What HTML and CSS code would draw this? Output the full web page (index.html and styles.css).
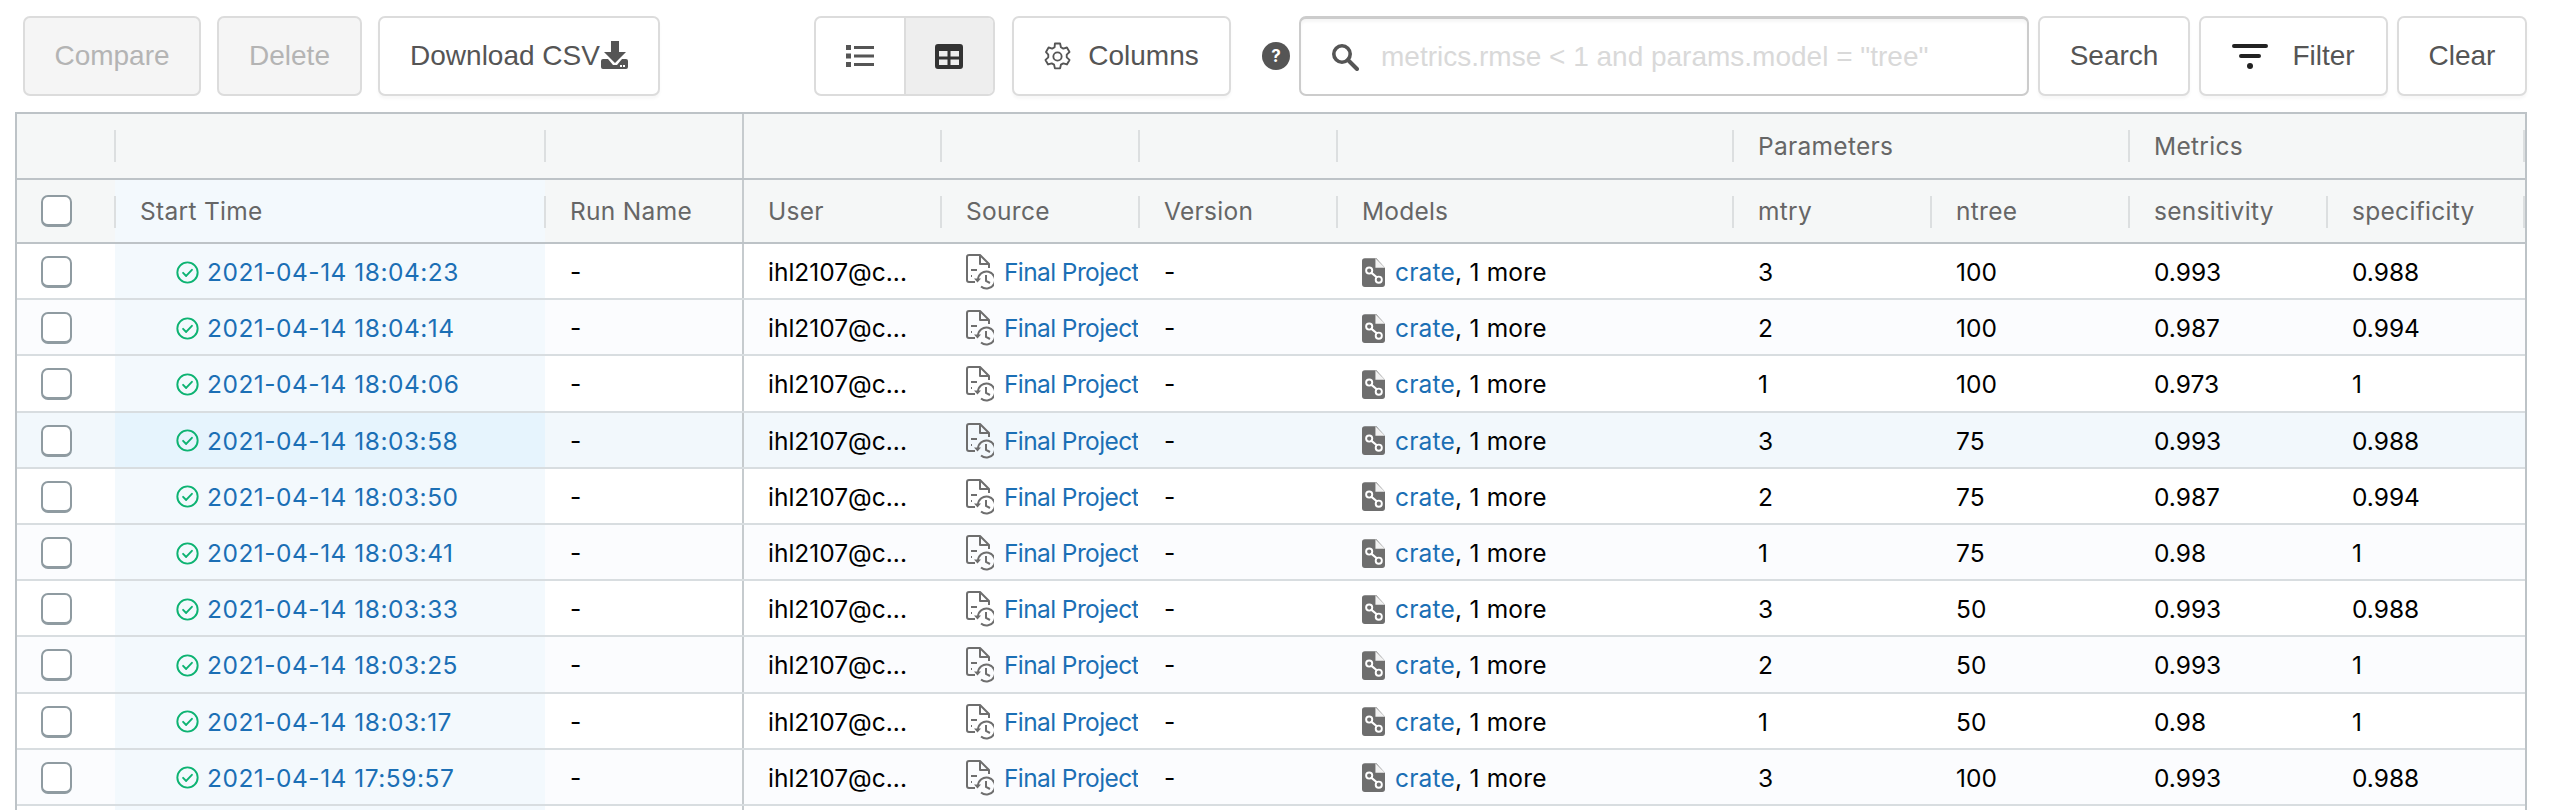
FILE: index.html
```html
<!DOCTYPE html>
<html lang="en">
<head>
<meta charset="utf-8">
<title>Experiment runs</title>
<link rel="stylesheet" href="styles.css">
</head>
<body>
<!-- Shared icons -->
<svg class="icon-defs" width="0" height="0">
  <symbol id="i-check" viewBox="0 0 24 24">
    <circle cx="12" cy="12" r="10.600" fill="none" stroke="#0db372" stroke-width="2"/>
    <path d="M7.400 12.400l3.200 3.200 6-6.400" fill="none" stroke="#0db372" stroke-width="2" stroke-linecap="round" stroke-linejoin="round"/>
  </symbol>
  <symbol id="i-source" viewBox="0 0 28 36">
    <path d="M9 28H3a2 2 0 0 1-2-2V3a2 2 0 0 1 2-2h11l9 9v4" fill="none" stroke="#6e6e6e" stroke-width="2" stroke-linejoin="round"/>
    <path d="M14 1v9h9" fill="none" stroke="#6e6e6e" stroke-width="2" stroke-linejoin="round"/>
    <path d="M5 16h6M5 22h1" fill="none" stroke="#6e6e6e" stroke-width="2"/>
    <path d="M12 26a8.500 8.500 0 1 1 3 6.500" fill="none" stroke="#6e6e6e" stroke-width="2"/>
    <path d="M8 24.500h7l-3.500 4z" fill="#6e6e6e"/>
    <path d="M20 21v6l4 2" fill="none" stroke="#6e6e6e" stroke-width="2"/>
  </symbol>
  <symbol id="i-model" viewBox="0 0 24 30">
    <path d="M3 0h12l9 10v17a3 3 0 0 1-3 3H3a3 3 0 0 1-3-3V3a3 3 0 0 1 3-3z" fill="#6e6e6e"/>
    <path d="M14 0v10h10z" fill="#f2f2f2"/>
    <path d="M7 13l11 9" stroke="#fff" stroke-width="2.200"/>
    <circle cx="7.500" cy="13" r="3.200" fill="#6e6e6e" stroke="#fff" stroke-width="2"/>
    <circle cx="17.500" cy="22.500" r="3.200" fill="#6e6e6e" stroke="#fff" stroke-width="2"/>
  </symbol>
</svg>

<!-- Toolbar -->
<div class="toolbar">
  <button class="btn btn-disabled btn-compare">Compare</button>
  <button class="btn btn-disabled btn-delete">Delete</button>
  <button class="btn btn-download">Download CSV<svg class="csv-icon" viewBox="0 0 27 28" width="27" height="28"><path d="M10 0h8v11h7L14 22 3 11h7z" fill="#555"/><path d="M2 18h5l5 6h4l5-6h4a2 2 0 0 1 2 2v6a2 2 0 0 1-2 2H2a2 2 0 0 1-2-2v-6a2 2 0 0 1 2-2z" fill="#555"/><path d="M19 24h2v2h-2zM22 24h2v2h-2z" fill="#fff"/></svg></button>
  <div class="view-toggle">
    <div class="view-item">
      <svg viewBox="0 0 28 24" width="28" height="24"><path d="M0 1h5v5H0zM0 9.500h5v5H0zM0 18h5v5H0zM8 2h20v3H8zM8 10.500h20v3H8zM8 19h20v3H8z" fill="#555"/></svg>
    </div>
    <div class="view-item view-active">
      <svg viewBox="0 0 28 25" width="28" height="25"><path fill-rule="evenodd" d="M3 0h22a3 3 0 0 1 3 3v19a3 3 0 0 1-3 3H3a3 3 0 0 1-3-3V3a3 3 0 0 1 3-3zM4 7v5.500h8.500V7zM15.500 7v5.500H24V7zM4 15.500V21h8.500v-5.500zM15.500 15.500V21H24v-5.500z" fill="#333"/></svg>
    </div>
  </div>
  <button class="btn btn-columns">
    <svg viewBox="0 0 26 28" width="27" height="29"><path d="M10.500 1.500h5l.8 3.600 2.300 1.300 3.500-1.100 2.500 4.400-2.700 2.500v2.600l2.700 2.500-2.500 4.400-3.500-1.100-2.300 1.300-.8 3.600h-5l-.8-3.600-2.300-1.300-3.500 1.100-2.500-4.400 2.700-2.500v-2.600L1.900 9.700l2.500-4.400 3.500 1.100 2.300-1.300z" fill="none" stroke="#555" stroke-width="1.800" stroke-linejoin="round"/><circle cx="13" cy="14" r="4" fill="none" stroke="#555" stroke-width="1.800"/></svg>
    Columns
  </button>
  <div class="help-icon">?</div>
  <div class="search-box">
    <svg viewBox="0 0 28 28" width="28" height="28"><circle cx="11" cy="11" r="8.200" fill="none" stroke="#555" stroke-width="3.600"/><path d="M17 17l9 9" stroke="#555" stroke-width="4" stroke-linecap="round"/></svg>
    <span class="search-placeholder">metrics.rmse &lt; 1 and params.model = "tree"</span>
  </div>
  <button class="btn btn-search">Search</button>
  <button class="btn btn-filter">
    <svg viewBox="0 0 36 25" width="36" height="25"><path d="M2 0h32a2 2 0 0 1 0 4H2a2 2 0 0 1 0-4zM9 10h18a2 2 0 0 1 0 4H9a2 2 0 0 1 0-4z" fill="#222"/><circle cx="18" cy="22" r="3" fill="#222"/></svg>
    Filter
  </button>
  <button class="btn btn-clear">Clear</button>
</div>

<!-- Runs table -->
<div class="runs-table">
  <div class="row head-row">
    <div class="cell c-check"></div>
    <div class="cell c-time"><span class="sep"></span></div>
    <div class="cell c-std"><span class="sep"></span></div>
    <div class="cell c-std group-start"></div>
    <div class="cell c-std"><span class="sep"></span></div>
    <div class="cell c-std"><span class="sep"></span></div>
    <div class="cell c-models"><span class="sep"></span></div>
    <div class="cell c-group-wide"><span class="sep"></span>Parameters</div>
    <div class="cell c-group-wide"><span class="sep"></span>Metrics<span class="sep sep-end"></span></div>
  </div>
  <div class="row head-row">
    <div class="cell c-check"><span class="checkbox"></span></div>
    <div class="cell c-time sorted"><span class="sep"></span>Start Time</div>
    <div class="cell c-std"><span class="sep"></span>Run Name</div>
    <div class="cell c-std group-start">User</div>
    <div class="cell c-std"><span class="sep"></span>Source</div>
    <div class="cell c-std"><span class="sep"></span>Version</div>
    <div class="cell c-models"><span class="sep"></span>Models</div>
    <div class="cell c-std"><span class="sep"></span>mtry</div>
    <div class="cell c-std"><span class="sep"></span>ntree</div>
    <div class="cell c-std"><span class="sep"></span>sensitivity</div>
    <div class="cell c-std"><span class="sep"></span>specificity<span class="sep sep-end"></span></div>
  </div>

  <div class="row">
    <div class="cell c-check"><span class="checkbox"></span></div>
    <div class="cell c-time sorted date-cell"><svg class="status-icon"><use href="#i-check"/></svg><a>2021-04-14 18:04:23</a></div>
    <div class="cell c-std">-</div>
    <div class="cell c-std group-start">ihl2107@c...</div>
    <div class="cell c-std"><svg class="source-icon"><use href="#i-source"/></svg><a class="clip">Final Project</a></div>
    <div class="cell c-std">-</div>
    <div class="cell c-models"><svg class="model-icon"><use href="#i-model"/></svg><a>crate</a>, 1 more</div>
    <div class="cell c-std">3</div>
    <div class="cell c-std">100</div>
    <div class="cell c-std">0.993</div>
    <div class="cell c-std">0.988</div>
  </div>
  <div class="row">
    <div class="cell c-check"><span class="checkbox"></span></div>
    <div class="cell c-time sorted date-cell"><svg class="status-icon"><use href="#i-check"/></svg><a>2021-04-14 18:04:14</a></div>
    <div class="cell c-std">-</div>
    <div class="cell c-std group-start">ihl2107@c...</div>
    <div class="cell c-std"><svg class="source-icon"><use href="#i-source"/></svg><a class="clip">Final Project</a></div>
    <div class="cell c-std">-</div>
    <div class="cell c-models"><svg class="model-icon"><use href="#i-model"/></svg><a>crate</a>, 1 more</div>
    <div class="cell c-std">2</div>
    <div class="cell c-std">100</div>
    <div class="cell c-std">0.987</div>
    <div class="cell c-std">0.994</div>
  </div>
  <div class="row">
    <div class="cell c-check"><span class="checkbox"></span></div>
    <div class="cell c-time sorted date-cell"><svg class="status-icon"><use href="#i-check"/></svg><a>2021-04-14 18:04:06</a></div>
    <div class="cell c-std">-</div>
    <div class="cell c-std group-start">ihl2107@c...</div>
    <div class="cell c-std"><svg class="source-icon"><use href="#i-source"/></svg><a class="clip">Final Project</a></div>
    <div class="cell c-std">-</div>
    <div class="cell c-models"><svg class="model-icon"><use href="#i-model"/></svg><a>crate</a>, 1 more</div>
    <div class="cell c-std">1</div>
    <div class="cell c-std">100</div>
    <div class="cell c-std">0.973</div>
    <div class="cell c-std">1</div>
  </div>
  <div class="row row-hover">
    <div class="cell c-check"><span class="checkbox"></span></div>
    <div class="cell c-time sorted date-cell"><svg class="status-icon"><use href="#i-check"/></svg><a>2021-04-14 18:03:58</a></div>
    <div class="cell c-std">-</div>
    <div class="cell c-std group-start">ihl2107@c...</div>
    <div class="cell c-std"><svg class="source-icon"><use href="#i-source"/></svg><a class="clip">Final Project</a></div>
    <div class="cell c-std">-</div>
    <div class="cell c-models"><svg class="model-icon"><use href="#i-model"/></svg><a>crate</a>, 1 more</div>
    <div class="cell c-std">3</div>
    <div class="cell c-std">75</div>
    <div class="cell c-std">0.993</div>
    <div class="cell c-std">0.988</div>
  </div>
  <div class="row">
    <div class="cell c-check"><span class="checkbox"></span></div>
    <div class="cell c-time sorted date-cell"><svg class="status-icon"><use href="#i-check"/></svg><a>2021-04-14 18:03:50</a></div>
    <div class="cell c-std">-</div>
    <div class="cell c-std group-start">ihl2107@c...</div>
    <div class="cell c-std"><svg class="source-icon"><use href="#i-source"/></svg><a class="clip">Final Project</a></div>
    <div class="cell c-std">-</div>
    <div class="cell c-models"><svg class="model-icon"><use href="#i-model"/></svg><a>crate</a>, 1 more</div>
    <div class="cell c-std">2</div>
    <div class="cell c-std">75</div>
    <div class="cell c-std">0.987</div>
    <div class="cell c-std">0.994</div>
  </div>
  <div class="row">
    <div class="cell c-check"><span class="checkbox"></span></div>
    <div class="cell c-time sorted date-cell"><svg class="status-icon"><use href="#i-check"/></svg><a>2021-04-14 18:03:41</a></div>
    <div class="cell c-std">-</div>
    <div class="cell c-std group-start">ihl2107@c...</div>
    <div class="cell c-std"><svg class="source-icon"><use href="#i-source"/></svg><a class="clip">Final Project</a></div>
    <div class="cell c-std">-</div>
    <div class="cell c-models"><svg class="model-icon"><use href="#i-model"/></svg><a>crate</a>, 1 more</div>
    <div class="cell c-std">1</div>
    <div class="cell c-std">75</div>
    <div class="cell c-std">0.98</div>
    <div class="cell c-std">1</div>
  </div>
  <div class="row">
    <div class="cell c-check"><span class="checkbox"></span></div>
    <div class="cell c-time sorted date-cell"><svg class="status-icon"><use href="#i-check"/></svg><a>2021-04-14 18:03:33</a></div>
    <div class="cell c-std">-</div>
    <div class="cell c-std group-start">ihl2107@c...</div>
    <div class="cell c-std"><svg class="source-icon"><use href="#i-source"/></svg><a class="clip">Final Project</a></div>
    <div class="cell c-std">-</div>
    <div class="cell c-models"><svg class="model-icon"><use href="#i-model"/></svg><a>crate</a>, 1 more</div>
    <div class="cell c-std">3</div>
    <div class="cell c-std">50</div>
    <div class="cell c-std">0.993</div>
    <div class="cell c-std">0.988</div>
  </div>
  <div class="row">
    <div class="cell c-check"><span class="checkbox"></span></div>
    <div class="cell c-time sorted date-cell"><svg class="status-icon"><use href="#i-check"/></svg><a>2021-04-14 18:03:25</a></div>
    <div class="cell c-std">-</div>
    <div class="cell c-std group-start">ihl2107@c...</div>
    <div class="cell c-std"><svg class="source-icon"><use href="#i-source"/></svg><a class="clip">Final Project</a></div>
    <div class="cell c-std">-</div>
    <div class="cell c-models"><svg class="model-icon"><use href="#i-model"/></svg><a>crate</a>, 1 more</div>
    <div class="cell c-std">2</div>
    <div class="cell c-std">50</div>
    <div class="cell c-std">0.993</div>
    <div class="cell c-std">1</div>
  </div>
  <div class="row">
    <div class="cell c-check"><span class="checkbox"></span></div>
    <div class="cell c-time sorted date-cell"><svg class="status-icon"><use href="#i-check"/></svg><a>2021-04-14 18:03:17</a></div>
    <div class="cell c-std">-</div>
    <div class="cell c-std group-start">ihl2107@c...</div>
    <div class="cell c-std"><svg class="source-icon"><use href="#i-source"/></svg><a class="clip">Final Project</a></div>
    <div class="cell c-std">-</div>
    <div class="cell c-models"><svg class="model-icon"><use href="#i-model"/></svg><a>crate</a>, 1 more</div>
    <div class="cell c-std">1</div>
    <div class="cell c-std">50</div>
    <div class="cell c-std">0.98</div>
    <div class="cell c-std">1</div>
  </div>
  <div class="row">
    <div class="cell c-check"><span class="checkbox"></span></div>
    <div class="cell c-time sorted date-cell"><svg class="status-icon"><use href="#i-check"/></svg><a>2021-04-14 17:59:57</a></div>
    <div class="cell c-std">-</div>
    <div class="cell c-std group-start">ihl2107@c...</div>
    <div class="cell c-std"><svg class="source-icon"><use href="#i-source"/></svg><a class="clip">Final Project</a></div>
    <div class="cell c-std">-</div>
    <div class="cell c-models"><svg class="model-icon"><use href="#i-model"/></svg><a>crate</a>, 1 more</div>
    <div class="cell c-std">3</div>
    <div class="cell c-std">100</div>
    <div class="cell c-std">0.993</div>
    <div class="cell c-std">0.988</div>
  </div>
  <!-- Next row, cut off by the window -->
  <div class="row">
    <div class="cell c-check"></div>
    <div class="cell c-time sorted"></div>
    <div class="cell c-std"></div>
    <div class="cell c-std group-start"></div>
  </div>
</div>
</body>
</html>
```

FILE: styles.css
```css
/*Basic body design*/
html, body {
	height: 810px;
	overflow: hidden;
}

body {
	margin: 0;
	background-color: #fff;
	color: #000;
	font-family: "Inter", "Liberation Sans", sans-serif;
	font-size: 24.500px;
}

.icon-defs {
	display: block;
	height: 0;
}

/*Toolbar*/
.toolbar {
	display: flex;
	align-items: center;
	height: 80px;
	padding: 16px 0 16px 23px;
}

.btn {
	display: flex;
	flex: none;
	align-items: center;
	justify-content: center;
	height: 80px;
	padding: 0;
	background-color: #fff;
	border: 2px solid #dcdcdc;
	border-radius: 7px;
	box-shadow: 0 3px 3px rgba(0, 0, 0, 0.03);
	color: #555;
	font-family: "Liberation Sans", sans-serif;
	font-size: 28px;
}

.btn-disabled {
	background-color: #f5f5f5;
	box-shadow: none;
	color: #b4b4b4;
}

.btn-compare { width: 178px; margin-right: 16px; }
.btn-delete { width: 145px; margin-right: 16px; }
.btn-download { width: 282px; margin-right: 154px; }
.btn-columns { width: 219px; margin-right: 31px; gap: 17px; }
.btn-search { width: 152px; margin-left: 9px; }
.btn-filter { width: 189px; margin-left: 9px; gap: 24px; }
.btn-clear { width: 130px; margin-left: 9px; }

.csv-icon {
	margin-left: 1px;
	transform: translateY(-1px);
}

.view-toggle {
	display: flex;
	flex: none;
	width: 181px;
	height: 80px;
	margin-right: 17px;
	box-sizing: border-box;
	border: 2px solid #dcdcdc;
	border-radius: 7px;
	overflow: hidden;
}

.view-item {
	display: flex;
	flex: 1;
	align-items: center;
	justify-content: center;
}

.view-active {
	background-color: #eee;
	border-left: 2px solid #dcdcdc;
}

.help-icon {
	flex: none;
	width: 28px;
	height: 28px;
	margin-right: 9px;
	border-radius: 50%;
	background-color: #555;
	color: #fff;
	font-size: 17px;
	font-weight: 700;
	line-height: 28px;
	text-align: center;
}

.search-box {
	display: flex;
	flex: none;
	align-items: center;
	gap: 22px;
	width: 730px;
	height: 80px;
	padding-left: 30px;
	box-sizing: border-box;
	border: 2px solid #ccc;
	border-top-width: 3px;
	border-radius: 7px;
	box-shadow: inset 0 3px 3px rgba(0, 0, 0, 0.04);
}

.search-placeholder {
	color: #d9d9d9;
	font-family: "Liberation Sans", sans-serif;
	font-size: 28px;
	white-space: nowrap;
}

/*Runs table*/
.runs-table {
	width: 2512px;
	height: 698px;
	margin-left: 15px;
	box-sizing: border-box;
	border: 2px solid #bdc3c7;
	border-bottom: none;
	overflow: hidden;
}

.row {
	display: flex;
	height: 56.200px;
	box-sizing: border-box;
	border-bottom: 2px solid #d8dde0;
}

.row:nth-child(even) {
	background-color: #fbfcfe;
}

.row.row-hover {
	background-color: #f2f8fc;
}

.row.row-hover .sorted {
	background-color: #e6f4fd;
}

.row.head-row {
	background-color: #f5f7f7;
	border-bottom: 2px solid #bdc3c7;
	color: #666;
	letter-spacing: 0.3px;
}

.row.head-row:nth-child(1) {
	height: 66px;
}

.row.head-row:nth-child(2) {
	height: 64px;
}

.cell {
	position: relative;
	display: flex;
	align-items: center;
	flex: none;
	box-sizing: border-box;
	padding-left: 25px;
	padding-top: 2px;
	white-space: nowrap;
}

.head-row .cell {
	padding-top: 0;
}

.c-check { width: 98px; padding-left: 24px; }
.c-time { width: 430px; }
.c-std { width: 198px; }
.c-models { width: 396px; letter-spacing: 0.2px; }
.c-group-wide { width: 396px; }

.group-start {
	margin-left: -1px;
	margin-right: 1px;
	padding-left: 24px;
	border-left: 2px solid #c6cbce;
}

.sorted {
	background-color: #f3f9fd;
}

/*Column resize marks*/
.sep {
	position: absolute;
	left: -1px;
	top: 16px;
	height: 32px;
	border-left: 2px solid #dcdfe0;
}

.sep-end {
	left: auto;
	right: 0;
}

.checkbox {
	display: block;
	width: 31px;
	height: 32px;
	box-sizing: border-box;
	background-color: #fff;
	border: 2px solid #8f9ba1;
	border-bottom-width: 3px;
	border-radius: 7px;
}

a {
	color: #1b6fb5;
}

.date-cell {
	padding-left: 61px;
	letter-spacing: 0.5px;
}

.status-icon {
	flex: none;
	width: 23px;
	height: 23px;
	margin-right: 8px;
}

.source-icon {
	flex: none;
	width: 28px;
	height: 36px;
	margin-right: 10px;
}

.clip {
	width: 134px;
	overflow: hidden;
	letter-spacing: -0.6px;
}

.model-icon {
	flex: none;
	width: 23px;
	height: 29px;
	margin-right: 10px;
}
```
